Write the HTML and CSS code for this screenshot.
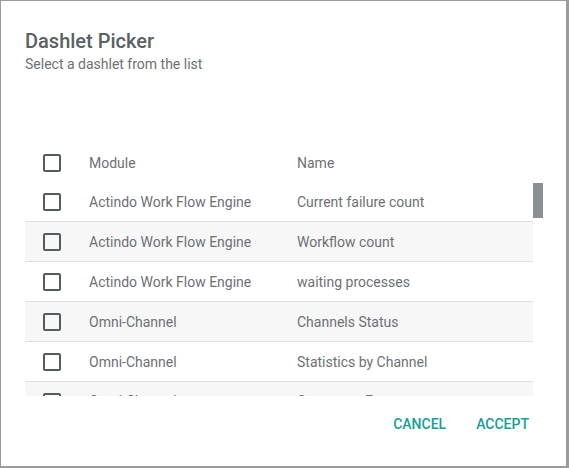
FILE: index.html
```html
<!DOCTYPE html>
<html>
<head>
<meta charset="utf-8">
<link rel="stylesheet" href="styles.css">
</head>
<body>
<div class="dialog">
  <div class="head">
    <h1 class="title">Dashlet Picker</h1>
    <p class="subtitle">Select a dashlet from the list</p>
  </div>
  <div class="list">
    <div class="rows">
      <div class="row header">
        <div class="cb-cell"><span class="cb"></span></div>
        <div class="mod">Module</div>
        <div class="name">Name</div>
      </div>
      <div class="row">
        <div class="cb-cell"><span class="cb"></span></div>
        <div class="mod">Actindo Work Flow Engine</div>
        <div class="name">Current failure count</div>
      </div>
      <div class="row alt">
        <div class="cb-cell"><span class="cb"></span></div>
        <div class="mod">Actindo Work Flow Engine</div>
        <div class="name">Workflow count</div>
      </div>
      <div class="row">
        <div class="cb-cell"><span class="cb"></span></div>
        <div class="mod">Actindo Work Flow Engine</div>
        <div class="name">waiting processes</div>
      </div>
      <div class="row alt">
        <div class="cb-cell"><span class="cb"></span></div>
        <div class="mod">Omni-Channel</div>
        <div class="name">Channels Status</div>
      </div>
      <div class="row">
        <div class="cb-cell"><span class="cb"></span></div>
        <div class="mod">Omni-Channel</div>
        <div class="name">Statistics by Channel</div>
      </div>
      <div class="row alt">
        <div class="cb-cell"><span class="cb"></span></div>
        <div class="mod">Omni-Channel</div>
        <div class="name">Connector Errors</div>
      </div>
    </div>
    <div class="track"><div class="thumb"></div></div>
  </div>
  <div class="actions">
    <button class="btn">Cancel</button>
    <button class="btn">Accept</button>
  </div>
</div>
</body>
</html>
```

FILE: styles.css
```css
* { box-sizing: border-box; }
html, body { margin: 0; padding: 0; background: #fff; }
body { font-family: Roboto, "Noto Sans", sans-serif; }

.dialog {
  width: 569px;
  height: 468px;
  border: 1px solid #9b9b9b;
  border-right-width: 3px;
  border-bottom-width: 2px;
  display: flex;
  flex-direction: column;
  background: #fff;
  overflow: hidden;
}

.head { padding: 28px 24px 0 24px; }
.title {
  margin: 0;
  font-size: 20px;
  line-height: 24px;
  font-weight: 500;
  color: #596164;
}
.subtitle {
  margin: 2px 0 0 0;
  font-size: 14px;
  line-height: 18px;
  color: #6e7174;
}

.list {
  margin: 70px 0 0 24px;
  height: 253px;
  display: flex;
  overflow: hidden;
}
.rows { width: 508px; }
.track { width: 10px; padding-top: 40px; }
.thumb { width: 10px; height: 35px; background: #8b9094; }

.row {
  display: flex;
  align-items: center;
  height: 40px;
  border-bottom: 1px solid #e0e0e0;
  font-size: 14px;
  color: #6e7174;
  background: #fff;
}
.row:last-child { height: 39px; align-items: flex-start; padding-top: 11px; }
.row.header { height: 39px; border-bottom: none; padding-top: 1px; }
.row.alt { background: #f7f7f7; }

.cb-cell { width: 64px; padding-left: 18px; display: flex; align-items: center; }
.cb {
  display: block;
  width: 18px;
  height: 18px;
  border: 2px solid #545b5f;
  border-radius: 2px;
}
.mod { width: 208px; }
.name { flex: 1; }

.actions {
  display: flex;
  justify-content: flex-end;
  padding: 10px 22px 0 0;
}
.btn {
  font-family: Roboto, "Noto Sans", sans-serif;
  font-size: 14px;
  font-weight: 500;
  text-transform: uppercase;
  color: #14a094;
  background: none;
  border: none;
  padding: 0 15px;
  height: 36px;
  letter-spacing: 0;
}
```
